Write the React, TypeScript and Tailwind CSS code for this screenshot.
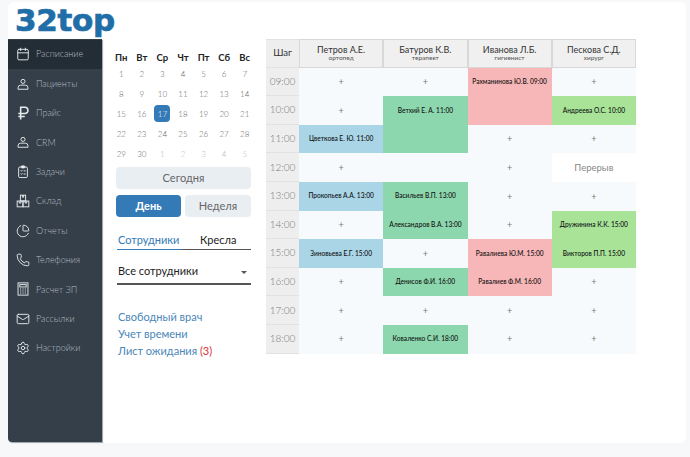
import type { SVGProps } from "react"
import { Calendar, ChartPie, Phone, Mail, Settings } from "lucide-react"

type IconProps = SVGProps<SVGSVGElement> & { strokeWidth?: number }

// icons that lucide draws differently from the picture
function Person(props: IconProps) {
  return (
    <svg viewBox="0 0 24 24" fill="none" stroke="currentColor" {...props}>
      <circle cx="12" cy="7.5" r="3.5" />
      <path d="M3.5 21v-2.5a4.5 4.5 0 0 1 4.5-4.5h8a4.5 4.5 0 0 1 4.5 4.5V21z" />
    </svg>
  )
}

function Ruble(props: IconProps) {
  return (
    <svg viewBox="0 0 24 24" fill="none" stroke="currentColor" {...props} strokeWidth={2.6}>
      <path d="M8 23V2h7a5.5 5.5 0 0 1 0 11H4M4 18h11" />
    </svg>
  )
}

function Tasks(props: IconProps) {
  return (
    <svg viewBox="0 0 24 24" fill="none" stroke="currentColor" {...props}>
      <rect x="4.5" y="3.5" width="15" height="18" rx="2" />
      <rect x="9" y="1.5" width="6" height="3.5" rx="1" fill="currentColor" />
      <path d="M8 9.5l1.2 1.2L11 8.5M13 10h3.5M8 15l1.2 1.2L11 14M13 15.5h3.5" />
    </svg>
  )
}

function Stock(props: IconProps) {
  return (
    <svg viewBox="0 0 24 24" fill="none" stroke="currentColor" {...props}>
      <rect x="7.5" y="2" width="9" height="10" />
      <rect x="2" y="12" width="10" height="10" />
      <rect x="12" y="12" width="10" height="10" />
      <path d="M11 2v3.5h2V2M5.5 12v3.5h3V12M15.5 12v3.5h3V12" />
    </svg>
  )
}

function Payroll(props: IconProps) {
  return (
    <svg viewBox="0 0 24 24" fill="none" stroke="currentColor" {...props}>
      <rect x="3.5" y="1.5" width="17" height="21" />
      <rect x="6.5" y="4.5" width="11" height="4" />
      <path d="M7 12h2M11 12h2M15 12h2M7 15.5h2M11 15.5h2M15 15.5h2M7 19h2M11 19h2M15 19h2" />
    </svg>
  )
}

const menu = [
  { label: "Расписание", icon: Calendar },
  { label: "Пациенты", icon: Person },
  { label: "Прайс", icon: Ruble },
  { label: "CRM", icon: Person },
  { label: "Задачи", icon: Tasks },
  { label: "Склад", icon: Stock },
  { label: "Отчеты", icon: ChartPie },
  { label: "Телефония", icon: Phone },
  { label: "Расчет ЗП", icon: Payroll },
  { label: "Рассылки", icon: Mail },
  { label: "Настройки", icon: Settings },
]

const days = ["Пн", "Вт", "Ср", "Чт", "Пт", "Сб", "Вс"]

const dates = Array.from({ length: 35 }, (_, i) => ({
  n: i < 30 ? i + 1 : i - 29,
  muted: i >= 30,
}))

const doctors = [
  { name: "Петров А.Е.", role: "ортопед" },
  { name: "Батуров К.В.", role: "терапевт" },
  { name: "Иванова Л.Б.", role: "гигиенист" },
  { name: "Пескова С.Д.", role: "хирург" },
]

const blue = "bg-[#a9d5e6]"
const green = "bg-[#8dd7ae]"
const red = "bg-[#f7b6b7]"
const lime = "bg-[#a8e398]"

type Cell = { text?: string; color?: string; plain?: boolean }
const p: Cell = { text: "+" }

const rows: { time: string; cells: Cell[] }[] = [
  { time: "09:00", cells: [p, p, { text: "Рахманинова Ю.В. 09:00", color: red }, p] },
  { time: "10:00", cells: [p, { text: "Ветхий Е. А. 11:00", color: green }, { color: red }, { text: "Андреева О.С. 10:00", color: lime }] },
  { time: "11:00", cells: [{ text: "Цветкова Е. Ю. 11:00", color: blue }, { color: green }, p, p] },
  { time: "12:00", cells: [p, {}, p, { text: "Перерыв", plain: true }] },
  { time: "13:00", cells: [{ text: "Прокопьев А.А. 13:00", color: blue }, { text: "Васильев В.П. 13:00", color: green }, p, p] },
  { time: "14:00", cells: [p, { text: "Александров В.А. 13:00", color: green }, p, { text: "Дружинина К.К. 15:00", color: lime }] },
  { time: "15:00", cells: [{ text: "Зиновьева Е.Г. 15:00", color: blue }, p, { text: "Равалиева Ю.М. 15:00", color: red }, { text: "Викторов П.П. 15:00", color: lime }] },
  { time: "16:00", cells: [p, { text: "Денисов Ф.И. 16:00", color: green }, { text: "Равалиев Ф.М. 16:00", color: red }, p] },
  { time: "17:00", cells: [p, p, p, p] },
  { time: "18:00", cells: [p, { text: "Коваленко С.И. 18:00", color: green }, p, p] },
]

function Sidebar() {
  return (
    <aside className="flex h-[403px] w-[94px] shrink-0 flex-col rounded-bl-sm bg-[#343f49] pt-[0.5px] shadow-[1px_1px_1px_#9aa1a8]">
      {menu.map((item, i) => {
        const Icon = item.icon
        return (
          <div
            key={item.label}
            className={`flex h-[29.4px] items-center gap-[6px] pl-[8px] text-[9px] font-light text-[#b4bbc1] ${i === 0 ? "bg-[#232d36]" : ""}`}
          >
            <span className="flex w-[14px] shrink-0 justify-center">
              <Icon className="h-[14px] w-[14px] shrink-0 text-[#e8ecef]" strokeWidth={1.6} />
            </span>
            <span>{item.label}</span>
          </div>
        )
      })}
    </aside>
  )
}

function Controls() {
  return (
    <section className="flex w-[164px] shrink-0 flex-col">
      <div className="ml-[9px] grid w-[144px] grid-cols-7 pt-[11px]">
        {days.map((d) => (
          <div key={d} className="h-[14px] text-center text-[9.5px] font-bold leading-[16px] text-[#222]">
            {d}
          </div>
        ))}
        {dates.map((d, i) => (
          <div key={i} className="flex h-[19.9px] items-center justify-center text-[8px] font-light">
            {d.n === 17 ? (
              <span className="flex h-[17px] w-[16px] items-center justify-center rounded-sm bg-[#337ab7] text-white">17</span>
            ) : (
              <span className={d.muted ? "text-[#bbb]" : "text-[#666]"}>{d.n}</span>
            )}
          </div>
        ))}
      </div>
      <div className="mt-[4px] flex w-[163px] flex-col gap-[6px] px-[14px]">
        <div className="flex h-[22px] items-center justify-center rounded-sm bg-[#e9eef3] text-[11px] text-[#666]">Сегодня</div>
        <div className="flex gap-[4px]">
          <div className="flex h-[22px] w-[65px] items-center justify-center rounded-sm bg-[#337ab7] text-[11px] font-bold text-white">День</div>
          <div className="flex h-[22px] w-[66px] items-center justify-center rounded-sm bg-[#e9eef3] text-[11px] text-[#666]">Неделя</div>
        </div>
      </div>
      <div className="ml-[15px] mt-[14px] w-[134px]">
        <div className="flex border-b border-[#555] text-[11px] leading-[18px]">
          <div className="-mb-px w-[65px] border-b border-[#337ab7] pl-px text-[#337ab7]">Сотрудники</div>
          <div className="pl-[18px] text-[#222]">Кресла</div>
        </div>
        <div className="mt-[13px] flex h-[22px] items-start justify-between border-b-2 border-[#555] pl-px pr-[4px] text-[11px] text-[#222]">
          <span>Все сотрудники</span>
          <span className="mt-[8px] h-0 w-0 border-x-[3px] border-t-[3px] border-x-transparent border-t-[#555]" />
        </div>
        <div className="mt-[23px] flex flex-col pl-px text-[11px] leading-[17px] text-[#4a86b8]">
          <span>Свободный врач</span>
          <span>Учет времени</span>
          <span>
            Лист ожидания <span className="text-[#d33]">(3)</span>
          </span>
        </div>
      </div>
    </section>
  )
}

function Schedule() {
  return (
    <section className="w-[370px] shrink-0">
      <div className="grid auto-rows-[28.6px] grid-cols-[33px_repeat(4,84.25px)]">
        <div className="flex items-center justify-center border-y border-[#e2e2e2] bg-[#eeeeee] text-[9.5px] text-[#333]">Шаг</div>
        {doctors.map((d) => (
          <div key={d.name} className="flex flex-col items-center justify-center border border-[#d8d8d8] bg-[#f0f0f0] leading-none text-[#333]">
            <span className="text-[9px]">{d.name}</span>
            <span className="mt-[1px] text-[6.5px] text-[#555]">{d.role}</span>
          </div>
        ))}
        {rows.map((row) => (
          <div key={row.time} className="contents">
            <div className="flex items-center justify-center border-b border-[#e2e2e2] bg-[#eeeeee] text-[10px] font-light text-[#777]">{row.time}</div>
            {row.cells.map((c, i) => (
              <div
                key={i}
                className={`flex items-center justify-center whitespace-nowrap ${c.color ?? (c.plain ? "bg-white" : "bg-[#f6fafd]")} ${
                  c.plain ? "text-[9.5px] text-[#888]" : c.color ? "text-[6.6px] font-medium text-[#111]" : "text-[9px] text-[#777]"
                }`}
              >
                {c.text}
              </div>
            ))}
          </div>
        ))}
      </div>
    </section>
  )
}

export default function App() {
  return (
    <div className="h-[457px] w-[690px] overflow-hidden bg-[#f7f8fa] pl-[8px] pt-[2px] font-['Lato','Noto_Sans',sans-serif]">
      <div className="h-[441px] w-[678px] rounded-md bg-white">
        <div className="h-[37px] pl-[7px] pt-[1px] font-['DejaVu_Sans',sans-serif] text-[31px] font-bold leading-[34px] tracking-[-0.3px] text-[#1f6ea8] [-webkit-text-stroke:0.7px_#1f6ea8]">
          32top
        </div>
        <div className="flex">
          <Sidebar />
          <Controls />
          <Schedule />
        </div>
      </div>
    </div>
  )
}
